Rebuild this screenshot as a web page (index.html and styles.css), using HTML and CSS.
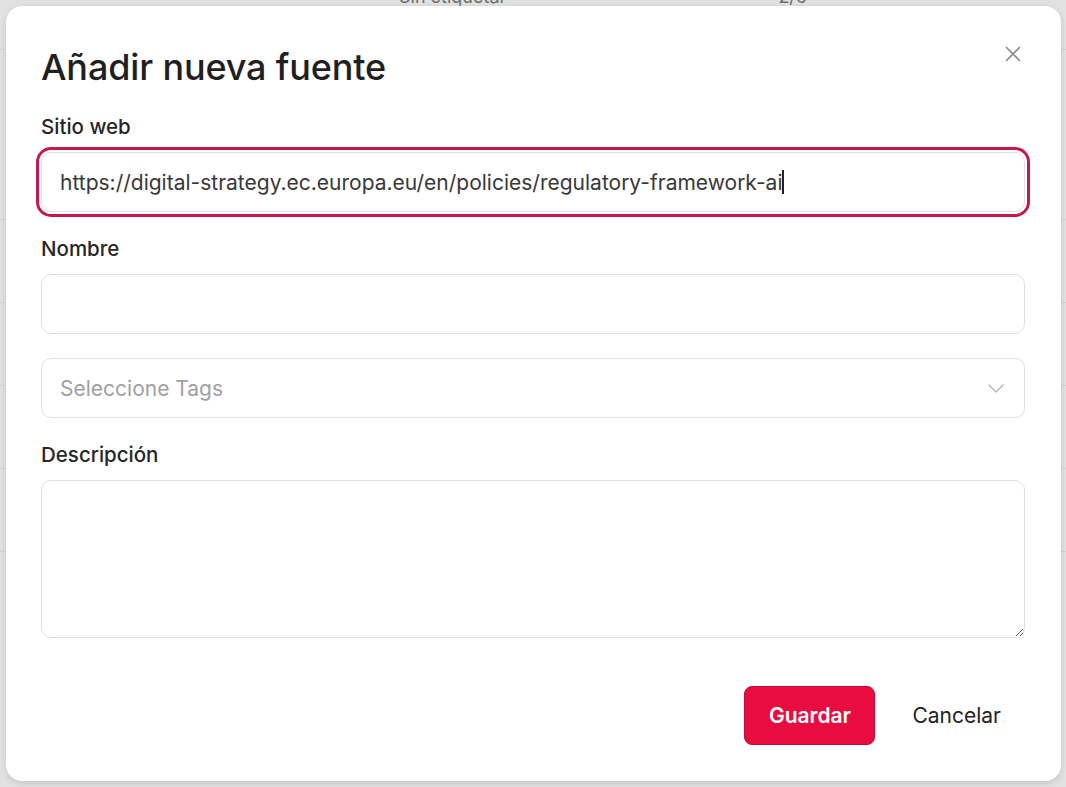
FILE: index.html
```html
<!DOCTYPE html>
<html lang="es">
<head>
<meta charset="utf-8">
<title>Añadir nueva fuente</title>
<link rel="stylesheet" href="styles.css">
</head>
<body>
<div class="page">
  <div class="row row-first"><span class="cell-a">Sin etiquetar</span><span class="cell-b">2/6</span></div>
  <div class="row row-second"></div>
  <div class="row"></div>
  <div class="row"></div>
  <div class="row"></div>
  <div class="row"></div>
</div>
<div class="overlay">
  <div class="modal">
    <div class="modal-head">
      <h1 class="title">Añadir nueva fuente</h1>
      <button class="close" aria-label="Cerrar">
        <svg width="16" height="16" viewBox="0 0 16 16"><path d="M1.5 1.5 L14.5 14.5 M14.5 1.5 L1.5 14.5" stroke="#8c8c8c" stroke-width="1.7" stroke-linecap="round" fill="none"/></svg>
      </button>
    </div>
    <label class="label first">Sitio web</label>
    <div class="field focused"><span class="value">https://digital-strategy.ec.europa.eu/en/policies/regulatory-framework-ai</span><span class="caret"></span></div>
    <label class="label">Nombre</label>
    <div class="field"></div>
    <div class="field select"><span class="placeholder">Seleccione Tags</span>
      <svg class="chev" width="16" height="9" viewBox="0 0 16 9"><path d="M1 1 L8 8 L15 1" stroke="#b8b8b8" stroke-width="1.5" fill="none" stroke-linecap="round" stroke-linejoin="round"/></svg>
    </div>
    <label class="label">Descripción</label>
    <textarea class="area"></textarea>
    <div class="actions">
      <button class="btn primary">Guardar</button>
      <button class="btn ghost">Cancelar</button>
    </div>
  </div>
</div>
</body>
</html>
```
FILE: styles.css
```css
* { box-sizing: border-box; }
html, body { margin: 0; height: 100%; }
body {
  font-family: Inter, "Noto Sans", sans-serif;
  background: #e1e1e1;
  overflow: hidden;
  position: relative;
}
.page { display: flex; flex-direction: column; height: 100%; overflow: hidden; }
.row {
  flex: 0 0 83px;
  border-bottom: 1px solid #d2d2d2;
  display: flex;
  align-items: flex-start;
  color: #6e6e6e;
  font-size: 18px;
}
.row-first { flex-basis: 64px; margin-top: -14px; }
.row-second { flex-basis: 170px; }
.cell-a { margin-left: 399px; }
.cell-b { margin-left: 272px; }
.overlay {
  position: absolute;
  inset: 0;
  padding: 6px 5px 6px 6px;
  display: flex;
}
.modal {
  flex: 1;
  background: #fff;
  border-radius: 16px;
  box-shadow: 0 2px 6px rgba(0,0,0,0.12);
  padding: 0 36px 0 35px;
  display: flex;
  flex-direction: column;
}
.modal-head {
  display: flex;
  justify-content: space-between;
  align-items: flex-start;
}
.title {
  margin: 41px 0 0;
  font-size: 36px;
  line-height: 40px;
  font-weight: 500;
  color: #1f1f1f;
  letter-spacing: -0.15px;
}
.close {
  border: 0;
  background: none;
  padding: 0;
  margin: 33px -3px 0 0;
  width: 30px;
  height: 30px;
  display: flex;
  align-items: center;
  justify-content: center;
}
.label {
  display: block;
  font-size: 20.5px;
  line-height: 22px;
  font-weight: 500;
  color: #262626;
  margin-top: 26px;
  margin-bottom: 14px;
}
.label.first { margin-top: 29px; }
.field {
  height: 60px;
  border: 1px solid #e0e0e0;
  border-radius: 10px;
  display: flex;
  align-items: center;
  padding: 0 18px;
  font-size: 21px;
  color: #383838;
  background: #fff;
}
.field.focused {
  outline: 3px solid #c21a4d;
  outline-offset: 2px;
}
.value { white-space: nowrap; }
.caret {
  display: inline-block;
  width: 2px;
  height: 24px;
  background: #222;
  margin-left: 0;
}
.select {
  margin-top: 24px;
  justify-content: space-between;
  padding-right: 20px;
}
.placeholder { color: #a0a0a0; }
.area {
  height: 158px;
  border: 1px solid #e0e0e0;
  border-radius: 10px;
  resize: vertical;
  font-family: inherit;
  font-size: 21px;
  padding: 14px 18px;
}
.actions {
  display: flex;
  justify-content: flex-end;
  margin-top: 48px;
}
.btn {
  font-family: inherit;
  font-size: 21px;
  height: 59px;
  border-radius: 8px;
  border: 0;
  cursor: pointer;
}
.primary {
  width: 131px;
  background: #e80c40;
  color: #fff;
  font-weight: 600;
  border: 1px solid #c40a36;
}
.ghost {
  background: none;
  color: #222;
  padding: 0 24px 0 37px;
}
```
